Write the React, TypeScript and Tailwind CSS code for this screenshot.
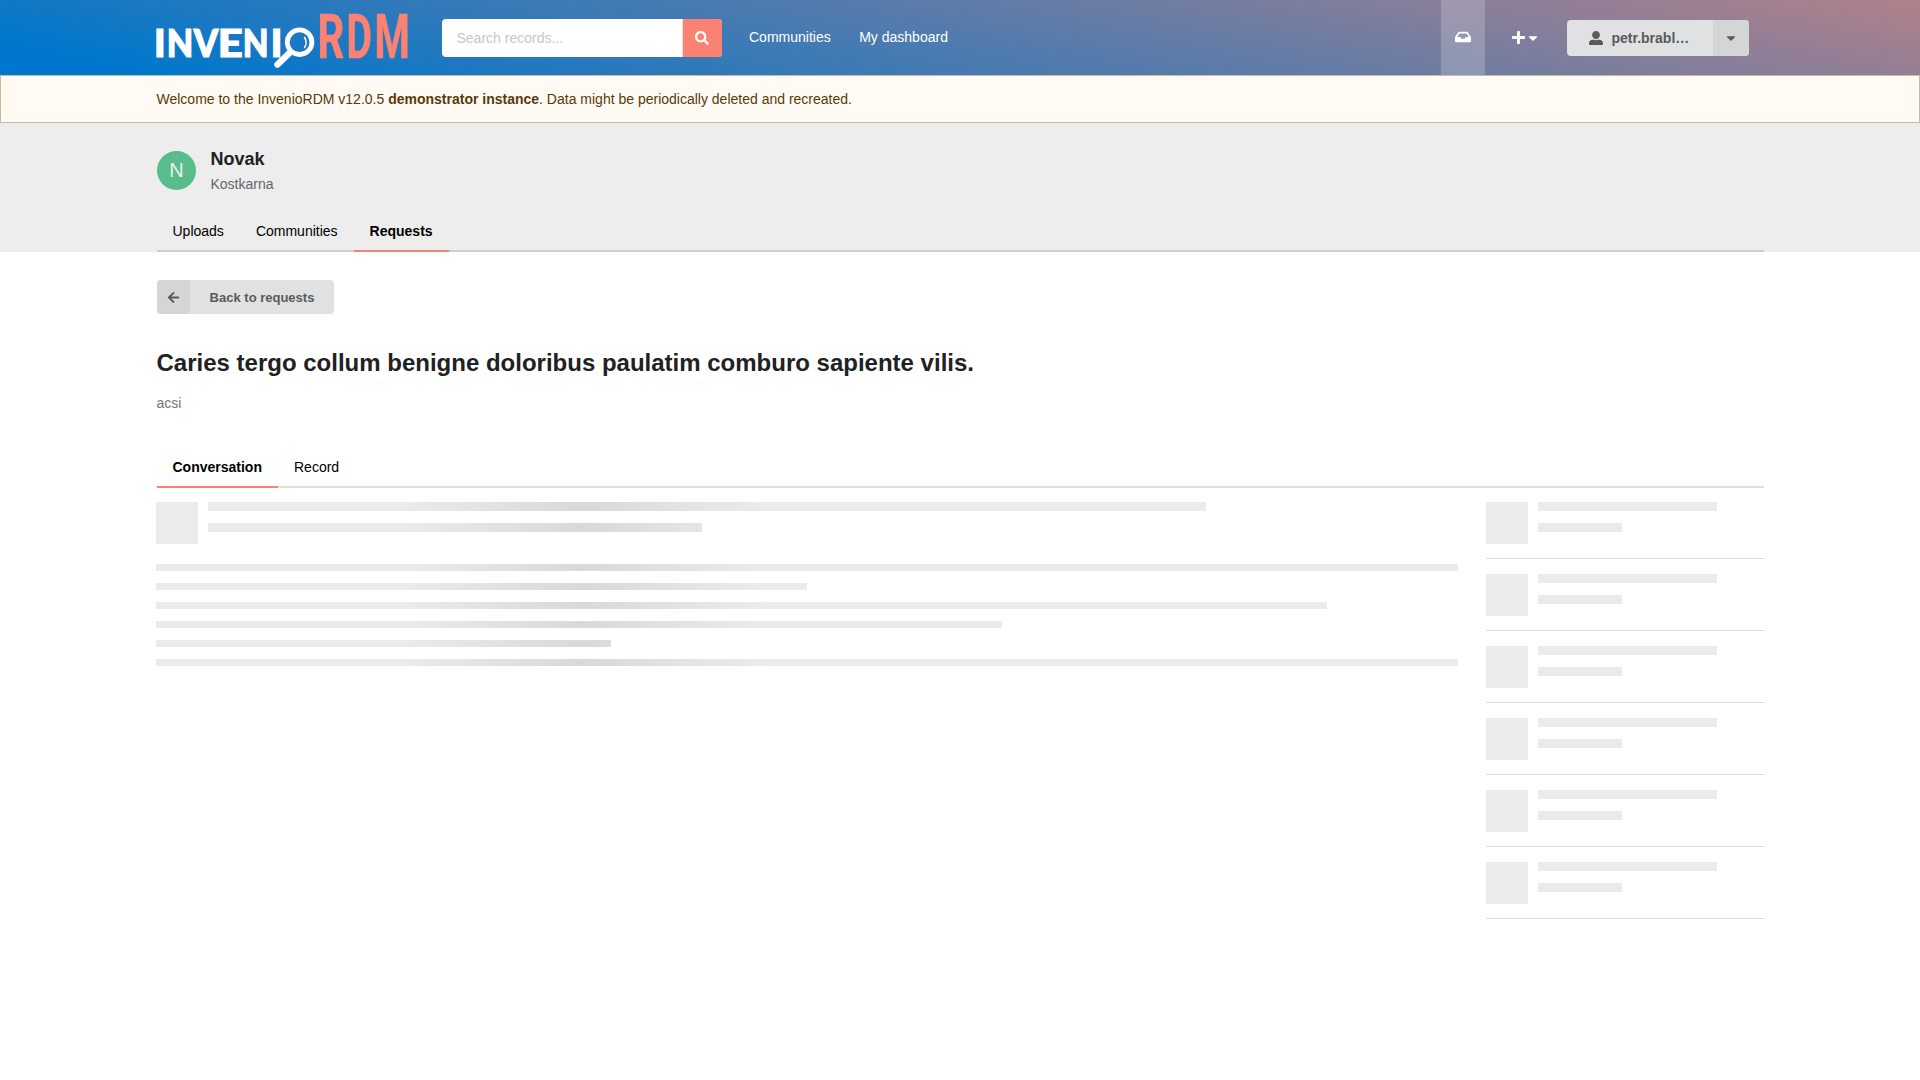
import { FaSearch, FaInbox, FaPlus, FaCaretDown, FaUserAlt, FaArrowLeft } from "react-icons/fa";

const shimmer =
  "bg-[linear-gradient(to_right,#ebebeb_404px,#d9d9d9_583px,#ebebeb_762px)] bg-fixed";

const inveni = [
  { char: "I", x: 154, width: 11.6 },
  { char: "N", x: 166.7, width: 26.5 },
  { char: "V", x: 193.7, width: 24.5 },
  { char: "E", x: 217.7, width: 25 },
  { char: "N", x: 242.7, width: 25.8 },
  { char: "I", x: 270.7, width: 11.6 },
];

const rdm = [
  { char: "R", x: 317.6, width: 26.8 },
  { char: "D", x: 346.4, width: 25.5 },
  { char: "M", x: 374.4, width: 35.3 },
];

function Logo() {
  return (
    <svg width="252" height="75" viewBox="156 0 252 75" className="block overflow-visible">
      <g
        fill="#fff"
        stroke="#fff"
        strokeWidth="1.2"
        fontFamily="Lato, sans-serif"
        fontWeight="900"
        fontSize="38"
      >
        {inveni.map((l) => (
          <text key={l.x} x={l.x} y="57" textLength={l.width} lengthAdjust="spacingAndGlyphs">
            {l.char}
          </text>
        ))}
      </g>
      <circle cx="299.6" cy="42.2" r="12.3" fill="none" stroke="#fff" strokeWidth="4.8" />
      <path d="M304.300 37Q308 42.500 304.300 48" fill="none" stroke="#fff" strokeWidth="1.500" />
      <path d="M290 52.500L277.500 64.500" stroke="#fff" strokeWidth="6.500" strokeLinecap="round" />
      <g
        fill="#fb8273"
        stroke="#fb8273"
        strokeWidth="0.6"
        fontFamily="Roboto, sans-serif"
        fontWeight="700"
        fontSize="61.5"
      >
        {rdm.map((l) => (
          <text key={l.x} x={l.x} y="58" textLength={l.width} lengthAdjust="spacingAndGlyphs">
            {l.char}
          </text>
        ))}
      </g>
    </svg>
  );
}

function Header() {
  return (
    <header className="flex h-[75px] items-center bg-[linear-gradient(12deg,#0077cc_7%,#b1808a_100%)] pl-[156px]">
      <Logo />
      <div className="ml-[34px] flex h-[38px] w-[280px] overflow-hidden rounded-[4px] bg-white">
        <div className="flex flex-1 items-center border-r border-gray-200 pl-[14.5px] text-[#c7c7c7]">
          Search records...
        </div>
        <div className="flex w-[39px] items-center justify-center bg-[#fb8273] pr-px text-white">
          <FaSearch size={14} />
        </div>
      </div>
      <nav className="mb-px ml-[27px] flex gap-[28.5px] text-white">
        <span>Communities</span>
        <span>My dashboard</span>
      </nav>
      <div className="ml-auto flex h-[75px] w-11 items-center justify-center bg-white/20 pb-px text-white">
        <FaInbox size={16} />
      </div>
      <div className="flex w-[82px] items-center pl-[26px] text-white">
        <FaPlus size={15} />
        <FaCaretDown size={14} />
      </div>
      <div className="mr-[171px] flex h-9 w-[182px] overflow-hidden rounded-[4px] bg-[#e0e1e2] font-bold text-[#5a5a5a]">
        <div className="flex flex-1 items-center pl-[21.5px]">
          <FaUserAlt size={14} className="mr-[9px]" />
          petr.brabl…
        </div>
        <div className="flex w-9 items-center justify-center bg-[#d4d5d6]">
          <FaCaretDown size={14} />
        </div>
      </div>
    </header>
  );
}

function Line({ className }: { className: string }) {
  return <div className={`${shimmer} ${className}`} />;
}

function SideItem() {
  return (
    <div className="flex h-[72px] gap-[10px] border-b border-[#dededf] pt-[15px]">
      <div className="size-[42px] bg-[#ebebeb]" />
      <div className="flex flex-col gap-3">
        <div className="h-[9px] w-[179px] bg-[#ebebeb]" />
        <div className="h-[9px] w-[84px] bg-[#ebebeb]" />
      </div>
    </div>
  );
}

export default function App() {
  return (
    <div className="min-h-[1080px] w-[1920px] bg-white font-['Liberation_Sans',Arial,sans-serif] text-[14px] leading-5 text-black">
      <Header />
      <div className="flex h-12 items-center border border-[#c9ba9b] bg-[#fffaf3] pl-[155.5px] text-[#573a08]">
        <p>
          Welcome to the InvenioRDM v12.0.5 <b>demonstrator instance</b>. Data might be periodically
          deleted and recreated.
        </p>
      </div>
      <section className="h-[129px] bg-[#ededed] px-[156px] pt-[25px]">
        <div className="ml-px flex h-[45px]">
          <div className="mt-[3px] flex size-[39px] items-center justify-center rounded-full bg-[#58bc8b] pb-0.5 text-[20px] text-[#ededed]">
            N
          </div>
          <div className="ml-[14.5px]">
            <h2 className="text-[18px] leading-[23px] font-bold text-[#212121]">Novak</h2>
            <p className="mt-[3px] text-[#666]">Kostkarna</p>
          </div>
        </div>
        <div className="mt-[17px] ml-px flex h-[42px] w-[1607px] border-b-2 border-[#cdcdcd]">
          <div className="flex h-[42px] pt-[11px] pl-[15.5px]">Uploads</div>
          <div className="flex h-[42px] pt-[11px] pl-8">Communities</div>
          <div className="ml-[16.5px] h-[42px] w-[95px] border-b-2 border-[#fb8273] pt-[11px] pl-[15.5px] font-bold">
            Requests
          </div>
        </div>
      </section>
      <main className="pl-[157px]">
        <button className="mt-7 flex h-[34px] w-[177px] overflow-hidden rounded-[4px] bg-[#e0e1e2] text-[13px] font-bold text-[#5a5a5a]">
          <span className="flex h-full w-[33px] items-center justify-center bg-[#d4d5d6]">
            <FaArrowLeft size={13} />
          </span>
          <span className="flex h-full flex-1 items-center justify-center pt-0.5">
            Back to requests
          </span>
        </button>
        <h1 className="mt-[34px] -ml-[0.5px] text-[24px] leading-[30px] font-bold text-[#212121]">
          Caries tergo collum benigne doloribus paulatim comburo sapiente vilis.
        </h1>
        <p className="mt-[15px] -ml-[0.5px] text-[#767676]">acsi</p>
        <div className="mt-[33px] flex h-[42px] w-[1607px] border-b-2 border-[#dededf]">
          <div className="h-[42px] w-[121px] border-b-2 border-[#fb8273] pt-[11px] pl-[15.5px] font-bold">
            Conversation
          </div>
          <div className="pt-[11px] pl-4">Record</div>
        </div>
        <div className="-ml-px flex">
          <div className="w-[1302px] pt-[14px]">
            <div className="flex h-[62px] gap-[10px]">
              <div className="size-[42px] bg-[#ebebeb]" />
              <div className="flex flex-col gap-3">
                <Line className="h-[9px] w-[998px]" />
                <Line className="h-[9px] w-[494px]" />
              </div>
            </div>
            <div className="flex flex-col gap-3">
              <Line className="h-[7px] w-[1302px]" />
              <Line className="h-[7px] w-[651px]" />
              <Line className="h-[7px] w-[1171px]" />
              <Line className="h-[7px] w-[846px]" />
              <Line className="h-[7px] w-[455px]" />
              <Line className="h-[7px] w-[1302px]" />
            </div>
          </div>
          <div className="-mt-px ml-7 w-[279px]">
            <SideItem />
            <SideItem />
            <SideItem />
            <SideItem />
            <SideItem />
            <SideItem />
          </div>
        </div>
      </main>
    </div>
  );
}
